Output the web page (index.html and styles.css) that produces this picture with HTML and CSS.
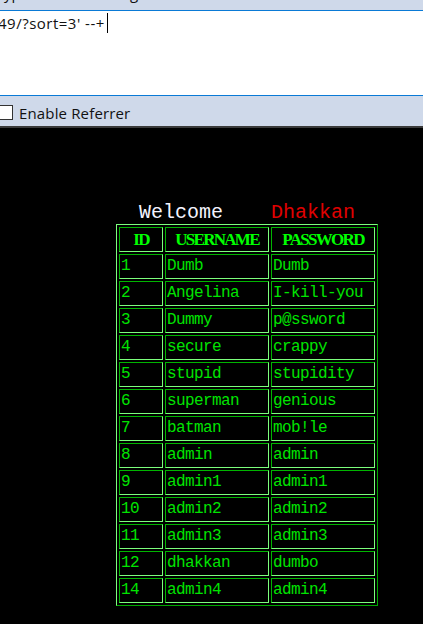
FILE: index.html
```html
<!DOCTYPE html>
<html>
<head>
<meta charset="utf-8">
<link rel="stylesheet" href="styles.css">
</head>
<body>
<div class="hackbar">
  <div class="tabs"><div class="tabs-inner"><span class="t1">ypt</span><span class="t2">Encoding</span></div></div>
  <div class="url"><span class="url-text">49/?sort=3' --+</span><span class="caret"></span></div>
  <div class="opts"><span class="cb"></span><span class="opt-label">Enable Referrer</span></div>
</div>
<div class="page">
  <div class="wrap">
    <div class="welcome">Welcome&nbsp;&nbsp;&nbsp; <span class="red">Dhakkan</span></div>
    <table class="users">
      <tr><th class="c1">ID</th><th class="c2">USERNAME</th><th class="c3">PASSWORD</th></tr>
      <tr><td>1</td><td>Dumb</td><td>Dumb</td></tr>
      <tr><td>2</td><td>Angelina</td><td>I-kill-you</td></tr>
      <tr><td>3</td><td>Dummy</td><td>p@ssword</td></tr>
      <tr><td>4</td><td>secure</td><td>crappy</td></tr>
      <tr><td>5</td><td>stupid</td><td>stupidity</td></tr>
      <tr><td>6</td><td>superman</td><td>genious</td></tr>
      <tr><td>7</td><td>batman</td><td>mob!le</td></tr>
      <tr><td>8</td><td>admin</td><td>admin</td></tr>
      <tr><td>9</td><td>admin1</td><td>admin1</td></tr>
      <tr><td>10</td><td>admin2</td><td>admin2</td></tr>
      <tr><td>11</td><td>admin3</td><td>admin3</td></tr>
      <tr><td>12</td><td>dhakkan</td><td>dumbo</td></tr>
      <tr><td>14</td><td>admin4</td><td>admin4</td></tr>
    </table>
  </div>
</div>
</body>
</html>
```

FILE: styles.css
```css
html, body {
  margin: 0;
  padding: 0;
  background: #000;
  height: 100%;
  overflow: hidden;
}

.hackbar {
  font-family: "Open Sans", "Noto Sans", sans-serif;
  color: #111;
}

.tabs {
  height: 11px;
  box-sizing: border-box;
  overflow: hidden;
  background: #cfd9ea;
  border-bottom: 1px solid #0a7ad6;
  font-size: 15px;
  line-height: 20px;
}

.tabs-inner {
  margin-top: -17px;
  display: flex;
  white-space: nowrap;
}

.t1 {
  margin-left: 4px;
}

.t2 {
  margin-left: 48px;
}

.url {
  height: 85px;
  background: #fff;
  border-bottom: 1px solid #0a7ad6;
  display: flex;
  align-items: flex-start;
  font-size: 15px;
  line-height: 20px;
  padding-top: 2px;
  box-sizing: border-box;
  white-space: nowrap;
}

.url-text {
  margin-left: -2px;
  letter-spacing: 0.5px;
}

.caret {
  display: inline-block;
  width: 1px;
  height: 20px;
  background: #000;
  margin-left: 2px;
}

.opts {
  height: 32px;
  background: #cfd9ea;
  border-bottom: 2px solid #3a3a3a;
  display: flex;
  align-items: center;
  font-size: 15px;
  padding-top: 3px;
  box-sizing: border-box;
}

.cb {
  display: inline-block;
  width: 13px;
  height: 13px;
  background: #fff;
  border: 1px solid #333;
  margin-left: -2px;
  margin-right: 6px;
}

.opt-label {
  line-height: 20px;
  letter-spacing: 0.15px;
}

.page {
  background: #000;
}

.wrap {
  margin-left: 116px;
  width: 262px;
  padding-top: 74px;
}

.welcome {
  font-family: "Liberation Mono", monospace;
  font-size: 20px;
  line-height: 22px;
  height: 22px;
  color: #f4f4ff;
  text-align: center;
  white-space: nowrap;
}

.red {
  color: #e00000;
}

.users {
  border-collapse: separate;
  border-spacing: 2px;
  border: 1px solid;
  border-color: #7cff7c #00a800 #00a800 #7cff7c;
  width: 262px;
  table-layout: fixed;
}

.users th, .users td {
  border: 1px solid;
  border-color: #00b400 #7cff7c #7cff7c #00b400;
  height: 23px;
  padding: 0 1px;
  box-sizing: content-box;
  line-height: 23px;
  white-space: nowrap;
  overflow: hidden;
}

.users th {
  font-family: "Liberation Serif", serif;
  font-weight: bold;
  font-size: 17px;
  letter-spacing: -1.7px;
  color: #00ff00;
  text-align: center;
}

.users td {
  font-family: "Liberation Mono", monospace;
  font-size: 16px;
  letter-spacing: -0.6px;
  color: #00e400;
  text-align: left;
}

.c1 {
  width: 40px;
}

.c2 {
  width: 100px;
}

.c3 {
  width: 100px;
}
```
